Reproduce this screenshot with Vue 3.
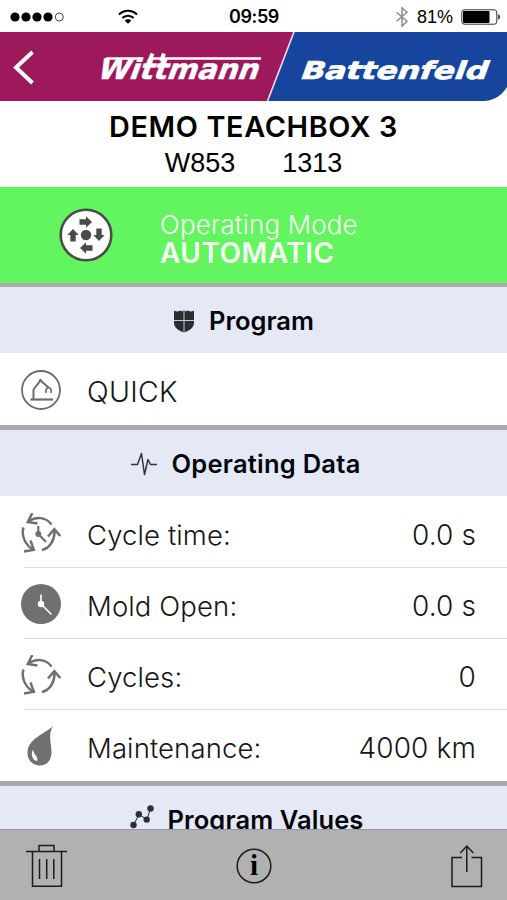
<script setup>
const rows = [
  { icon: 'cycletime', label: 'Cycle time:', value: '0.0 s' },
  { icon: 'clock', label: 'Mold Open:', value: '0.0 s' },
  { icon: 'cycles', label: 'Cycles:', value: '0' },
  { icon: 'drop', label: 'Maintenance:', value: '4000 km' },
]
const turns = [0, 90, 180, 270]
</script>

<template>
  <div class="screen">
    <div class="status">
      <svg class="dots" width="56" height="12" viewBox="0 0 56 12">
        <circle cx="5" cy="6" r="4.6" /><circle cx="16" cy="6" r="4.6" /><circle cx="27" cy="6" r="4.6" /><circle cx="38" cy="6" r="4.6" />
        <circle cx="49.3" cy="6" r="4" fill="none" stroke="#444" stroke-width="1" />
      </svg>
      <svg class="wifi" width="20" height="16" viewBox="0 0 20 16">
        <g fill="none" stroke="#000" stroke-width="2.1">
          <path d="M1 5.5C6 .4 14 .4 19 5.5" /><path d="M4.4 9C7.6 5.9 12.4 5.9 15.6 9" />
        </g>
        <path d="M6.7 11.4C8.6 9.7 11.4 9.7 13.3 11.4L10 14.8Z" />
      </svg>
      <span class="time">09:59</span>
      <div class="power">
        <svg width="14" height="22" viewBox="0 0 14 22" fill="none" stroke="#8c8c8c" stroke-width="1.5">
          <path d="M1.5 6.3L12 15.3L7 20V2L12 6.3L1.5 15.3" />
        </svg>
        <span class="pct">81%</span>
        <svg width="40" height="16" viewBox="0 0 40 16">
          <rect x=".8" y=".8" width="35" height="14.4" rx="2.5" fill="#fff" stroke="#333" stroke-width="1" />
          <rect x="2" y="2" width="26.5" height="12" rx="1" />
          <path d="M37.3 5.3C39.3 5.8 39.3 10.2 37.3 10.7Z" />
        </svg>
      </div>
    </div>

    <header class="brand">
      <svg width="507" height="69" viewBox="0 0 507 69">
        <rect width="507" height="69" fill="#9d195b" />
        <path d="M294 0H507V69H267.500Z" fill="#17459e" />
        <path d="M507 55C502 63 495 68 485 69H507Z" fill="#fff" />
        <path d="M294 0L267.500 69" stroke="#f3dcea" stroke-width="1.600" />
        <path d="M32.500 20L16 35.500L32.500 51" fill="none" stroke="#fff" stroke-width="4" />
        <g fill="#fff" stroke="#fff">
          <text class="logo" transform="translate(96 47) skewX(-20)" textLength="161" lengthAdjust="spacingAndGlyphs" font-size="28" stroke-width=".5">Wittmann</text>
          <path d="M106 26.500H141M150 26.500H261" fill="none" stroke-width="2.600" />
          <path d="M149.500 29L152.500 21.500M161 29L164 21.500" stroke-width="4" />
          <text class="logo" transform="translate(299 47) skewX(-20)" textLength="187" lengthAdjust="spacingAndGlyphs" font-size="24.500" stroke-width=".7">Battenfeld</text>
        </g>
      </svg>
    </header>

    <section class="device">
      <h1>DEMO TEACHBOX 3</h1>
      <p><span>W853</span><span>1313</span></p>
    </section>

    <section class="mode">
      <svg width="54" height="54" viewBox="0 0 54 54">
        <circle cx="27" cy="27" r="25.300" fill="#fff" stroke="#4a4a4a" stroke-width="2.600" />
        <g fill="#4a4a4a">
          <circle cx="27" cy="27" r="5.200" />
          <path v-for="t in turns" :key="t" d="M20.500 11.300H27V8.300L33 14L27 19.700V16.700H20.500Z" :transform="`rotate(${t} 27 27)`" />
        </g>
      </svg>
      <div class="mode-text"><span>Operating Mode</span><strong>AUTOMATIC</strong></div>
    </section>

    <h2 class="bar">
      <svg width="22" height="24" viewBox="0 0 22 24">
        <path d="M1 1.500C3.500 3 5 2.500 7 1.500C9 2.800 10 2.300 11 1C12 2.300 13 2.800 15 1.500C17 2.500 18.500 3 21 1.500V14C21 19 16 21.500 11 23.500C6 21.500 1 19 1 14Z" fill="#2c2d33" />
        <path d="M11 2V23M1 11.500H21" stroke="#c9cbd3" stroke-width="1" />
      </svg>
      <span>Program</span>
    </h2>
    <div class="row quick">
      <svg width="40" height="40" viewBox="0 0 40 40" fill="none" stroke="#6b6b6b">
        <circle cx="20" cy="20" r="19" stroke-width="1.800" />
        <path d="M9.500 29.500H32" stroke-width="2.200" />
        <path d="M12.500 29V19.500L19.500 10.500L27.500 17.500" stroke-width="2" />
        <path d="M25.300 23C24 20 25.500 18 27.800 17.500C30.300 18.500 30.800 20.500 29.800 23" stroke-width="1.700" />
        <circle cx="19.500" cy="10.500" r="1.600" fill="#6b6b6b" stroke="none" />
      </svg>
      <span class="label wide">QUICK</span>
    </div>

    <h2 class="bar data">
      <svg width="26" height="24" viewBox="0 0 26 24" fill="none" stroke="#33343c" stroke-width="1.500" stroke-linejoin="round">
        <path d="M0 12.500H6.500L10.500 1.500L13.500 22.500L17 7.500L19.500 12.500H26" />
      </svg>
      <span>Operating Data</span>
    </h2>
    <div class="list">
      <div v-for="r in rows" :key="r.icon" class="row">
        <svg width="40" height="40" viewBox="0 0 40 40">
          <g v-if="r.icon === 'cycletime' || r.icon === 'cycles'" fill="none" stroke="#707070" stroke-width="2.500">
            <path d="M30.500 11.500C25 4 15 3 7.500 8.500M11.300 0L6.800 9L16.500 10.500" />
            <path d="M2.500 14.500C0 22 4 32 12 36.500M9.500 27.500L12.800 36.700L3 38.500" />
            <path d="M21 37C29 35 34 27 33.500 17M27 23.500L33.300 16.200L39.300 23" />
            <g v-if="r.icon === 'cycletime'">
              <path d="M17.300 13V21L25 29" stroke-width="2.100" />
              <circle cx="17.300" cy="21" r="3" fill="#707070" stroke="none" />
            </g>
          </g>
          <g v-else-if="r.icon === 'clock'">
            <circle cx="20" cy="20" r="20" fill="#707070" />
            <path d="M20 10.500V20L30.500 30.500" fill="none" stroke="#fff" stroke-width="1.600" />
            <circle cx="20" cy="20" r="3.200" fill="#fff" />
          </g>
          <g v-else>
            <path d="M32 0C26.500 9 30.500 17 30.500 26C30.500 34.500 26 39.500 19 39.500C11.500 39.500 6.500 34 6.500 27C6.500 13 22 9 32 0Z" fill="#707070" />
            <path d="M12 23.500C9.500 28 11 34 16 35C18 31 12.500 29 12 23.500Z" fill="#fff" />
          </g>
        </svg>
        <span class="label">{{ r.label }}</span>
        <span class="value">{{ r.value }}</span>
      </div>
    </div>

    <h2 class="bar last">
      <svg width="24" height="24" viewBox="0 0 24 24" fill="#2b2d38" stroke="#2b2d38">
        <path d="M3.500 20L9 9.500L17 14.500L20.500 3.500" fill="none" stroke-width="1" />
        <g stroke="none"><circle cx="3.500" cy="20" r="3.200" /><circle cx="8.800" cy="9.200" r="3.200" /><circle cx="16.700" cy="14.600" r="3.200" /><circle cx="20.500" cy="3.500" r="3.200" /></g>
      </svg>
      <span>Program Values</span>
    </h2>

    <footer class="tools">
      <svg width="42" height="44" viewBox="0 0 42 44" fill="none" stroke="#1c1c1c" stroke-width="1.500">
        <path d="M0 7.500H41M6.500 7.500V42.300H35.500V7.500M13 7.500V1.500H28V7.500M13.500 15V35M20.700 15V35M27.800 15V35" />
      </svg>
      <svg width="36" height="36" viewBox="0 0 36 36">
        <circle cx="18" cy="18" r="16.800" fill="none" stroke="#1c1c1c" stroke-width="1.500" />
        <text x="18" y="27" text-anchor="middle" font-family="Liberation Serif, serif" font-size="29" font-weight="bold">i</text>
      </svg>
      <svg width="32" height="44" viewBox="0 0 32 44" fill="none" stroke="#1c1c1c" stroke-width="1.500">
        <path d="M11 13.500H1V42.500H30.500V13.500H20.500M15.800 28V2.500M9.300 9L15.800 2L22.300 9" />
      </svg>
    </footer>
  </div>
</template>

<style>
body { margin: 0; background: #fff; }
</style>

<style scoped>
.screen { width: 507px; height: 900px; overflow: hidden; display: flex; flex-direction: column; background: #fff; color: #000; font-family: "Liberation Sans", Arial, sans-serif; }
.screen > * { flex-shrink: 0; box-sizing: border-box; }
.status { height: 32px; display: grid; grid-template-columns: 108px 120px 100px 1fr; align-items: center; padding: 1px 6px 0 10px; }
.time { font: 600 18px Inter, sans-serif; white-space: nowrap; margin-left: -9px; letter-spacing: -0.4px; }
.power { display: flex; align-items: center; justify-content: flex-end; gap: 8px; }
.pct { font-size: 18px; padding-top: 2px; }
.brand { height: 69px; }
.brand svg { display: block; }
.logo { font-family: "DejaVu Sans", sans-serif; font-weight: 700; }
.device { height: 86px; display: flex; flex-direction: column; align-items: center; padding-top: 8px; }
h1, h2, p { margin: 0; }
h1 { font: 600 28.8px/36px Inter, sans-serif; letter-spacing: 0.65px; white-space: nowrap; }
.device p { display: flex; gap: 47px; font-size: 27px; line-height: 36px; }
.mode { height: 100px; background: #63f560; border-bottom: 4px solid #a9adac; display: flex; align-items: center; padding-left: 59px; gap: 47px; color: #f5fff3; }
.mode-text { display: flex; flex-direction: column; white-space: nowrap; font: 300 26px/28px Inter, sans-serif; letter-spacing: 0.15px; padding-top: 8px; }
.mode-text strong { font-weight: 600; font-size: 28px; letter-spacing: 0.5px; }
.bar { height: 66px; background: #e4e9f5; display: flex; align-items: center; justify-content: center; gap: 14px; font: 600 25.5px/30px Inter, sans-serif; color: #05060c; white-space: nowrap; padding-right: 20px; padding-top: 2px; }
.data { letter-spacing: 0.25px; padding-right: 15px; }
.row { height: 71px; box-sizing: border-box; display: flex; align-items: center; padding: 2px 31px 0 21px; font: 300 27.5px/36px Inter, sans-serif; letter-spacing: 0.12px; color: #161616; }
.quick { height: 77px; border-bottom: 5px solid #a8a9ae; }
.label { margin-left: 26px; flex: 1; padding-top: 5px; }
.wide { font-size: 28.5px; letter-spacing: 0.3px; padding-top: 3px; }
.value { padding-top: 5px; font-size: 28px; }
.list { height: 290px; border-bottom: 5px solid #a8a9ae; }
.list .row + .row { background: linear-gradient(#dedede, #dedede) 24px 0 / 100% 1px no-repeat; }
.last { height: 43px; align-items: flex-start; padding-top: 19px; padding-right: 14px; overflow: hidden; letter-spacing: 0.1px; }
.tools { height: 71px; background: #b1b1b1; border-top: 1px solid #989aa1; display: grid; grid-template-columns: 1fr 36px 1fr; align-items: center; padding: 1px 24px 0 26px; }
.tools svg:nth-child(2) { margin-left: -1px; }
.tools svg:last-child { justify-self: end; }
</style>
